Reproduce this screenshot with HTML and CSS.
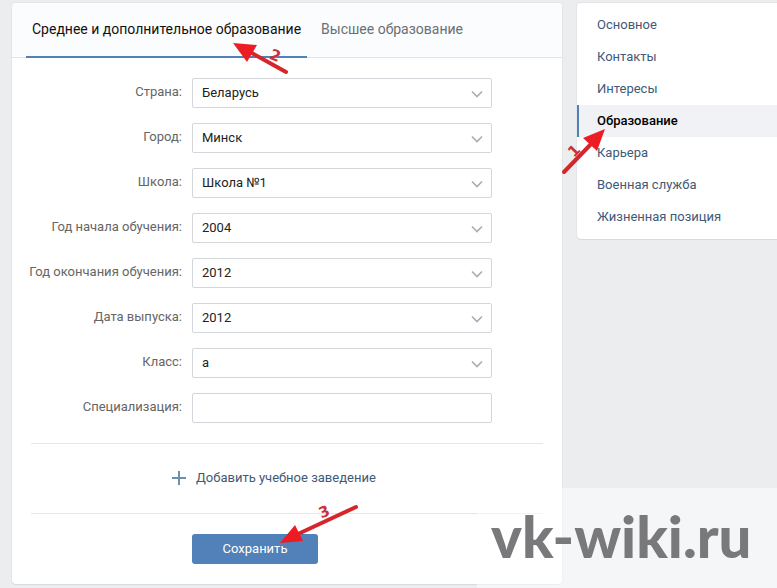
FILE: index.html
```html
<!DOCTYPE html>
<html lang="ru">
<head>
  <meta charset="utf-8">
  <title>Образование</title>
  <link rel="stylesheet" href="styles.css">
</head>
<body>
  <svg class="symbols" width="0" height="0">
    <symbol id="chevron" viewBox="0 0 12 8">
      <path d="M1 1.5 L6 6.5 L11 1.5" fill="none" stroke="currentColor" stroke-width="1.6"/>
    </symbol>
  </svg>

  <div class="page">
    <!-- Education form -->
    <main class="card content">
      <nav class="tabs">
        <a class="tab active" href="#school">Среднее и дополнительное образование
          <svg class="arrow arrow-tab" width="60" height="40" viewBox="0 0 60 40">
            <path d="M17 9 L53 29" stroke="#d5262c" stroke-width="4" stroke-linecap="round"/>
            <path d="M0 0 L24 2 L14 19 Z" fill="#ed1c24"/>
            <text class="arrow-number" x="37" y="17" transform="rotate(22 41 12)">2</text>
          </svg>
        </a>
        <a class="tab" href="#university">Высшее образование</a>
      </nav>

      <form>
        <div class="fields">
          <div class="row">
            <label for="country">Страна:</label>
            <div class="select">
              <select id="country"><option>Беларусь</option></select>
              <svg class="chevron"><use href="#chevron"/></svg>
            </div>
          </div>
          <div class="row">
            <label for="city">Город:</label>
            <div class="select">
              <select id="city"><option>Минск</option></select>
              <svg class="chevron"><use href="#chevron"/></svg>
            </div>
          </div>
          <div class="row">
            <label for="school-name">Школа:</label>
            <div class="select">
              <select id="school-name"><option>Школа №1</option></select>
              <svg class="chevron"><use href="#chevron"/></svg>
            </div>
          </div>
          <div class="row">
            <label for="start">Год начала обучения:</label>
            <div class="select">
              <select id="start"><option>2004</option></select>
              <svg class="chevron"><use href="#chevron"/></svg>
            </div>
          </div>
          <div class="row">
            <label for="finish">Год окончания обучения:</label>
            <div class="select">
              <select id="finish"><option>2012</option></select>
              <svg class="chevron"><use href="#chevron"/></svg>
            </div>
          </div>
          <div class="row">
            <label for="graduation">Дата выпуска:</label>
            <div class="select">
              <select id="graduation"><option>2012</option></select>
              <svg class="chevron"><use href="#chevron"/></svg>
            </div>
          </div>
          <div class="row">
            <label for="class">Класс:</label>
            <div class="select">
              <select id="class"><option>а</option></select>
              <svg class="chevron"><use href="#chevron"/></svg>
            </div>
          </div>
          <div class="row">
            <label for="speciality">Специализация:</label>
            <input type="text" id="speciality">
          </div>
        </div>

        <div class="add">
          <a href="#add">
            <svg width="14" height="14" viewBox="0 0 14 14">
              <path d="M7 0 V14 M0 7 H14" stroke="#6f8eb0" stroke-width="2"/>
            </svg>
            Добавить учебное заведение
          </a>
        </div>

        <div class="actions">
          <button type="submit" class="save">Сохранить
            <svg class="arrow arrow-save" width="82" height="42" viewBox="0 0 82 42">
              <path d="M18 31 L76 4" stroke="#d5262c" stroke-width="4" stroke-linecap="round"/>
              <path d="M0 40 L15 22 L23 38 Z" fill="#ed1c24"/>
              <text class="arrow-number" x="39" y="14" transform="rotate(-22 44 9)">3</text>
            </svg>
          </button>
        </div>
      </form>
    </main>

    <!-- Section menu -->
    <aside class="card menu">
      <a href="#main">Основное</a>
      <a href="#contacts">Контакты</a>
      <a href="#interests">Интересы</a>
      <a class="active" href="#education">Образование
        <svg class="arrow arrow-menu" width="46" height="48" viewBox="0 0 46 48">
          <path d="M2 44 L31 14" stroke="#d5262c" stroke-width="4" stroke-linecap="round"/>
          <path d="M43 1 L21 10 L35 23 Z" fill="#ed1c24"/>
          <text class="arrow-number" x="7" y="28" transform="rotate(-45 12 23)">1</text>
        </svg>
      </a>
      <a href="#career">Карьера</a>
      <a href="#military">Военная служба</a>
      <a href="#views">Жизненная позиция</a>
    </aside>
  </div>

  <div class="watermark">vk-wiki.ru</div>
</body>
</html>
```
FILE: styles.css
```css
* {
  box-sizing: border-box;
}

body {
  margin: 0;
  background: #ebedef;
  color: #222;
  font-family: Roboto, "Noto Sans", sans-serif;
  font-size: 13px;
  line-height: 16px;
}

a {
  color: #3d5a78;
  text-decoration: none;
}

.symbols {
  position: absolute;
}

.page {
  display: flex;
  align-items: flex-start;
  gap: 15px;
  padding: 3px 0 4px 12px;
}

.card {
  background: #fff;
  border-radius: 4px;
  box-shadow: 0 1px 0 #d7dadf, 0 0 0 1px #e3e5e9;
}

.content {
  flex: 1;
  min-width: 0;
}

/* Tabs */
.tabs {
  display: flex;
  gap: 8px;
  height: 55px;
  padding: 0 14px;
  background: #fafcfe;
  border-bottom: 1px solid #dfe5eb;
  border-radius: 4px 4px 0 0;
}

.tab {
  position: relative;
  height: 55px;
  padding: 18px 6px;
  color: #6b6f75;
  font-size: 14px;
  white-space: nowrap;
}

.tab.active {
  color: #111;
  border-bottom: 2px solid #5181b8;
}

/* Form */
.fields {
  display: grid;
  gap: 15px;
  padding: 20px 0;
}

.row {
  display: grid;
  grid-template-columns: 170px minmax(0, 300px);
  column-gap: 10px;
}

.row label {
  padding-top: 6px;
  color: #656565;
  text-align: right;
}

.select {
  position: relative;
}

.row select,
.row input {
  display: block;
  width: 100%;
  height: 30px;
  margin: 0;
  padding: 0 9px;
  appearance: none;
  background: #fff;
  border: 1px solid #d3d6da;
  border-radius: 2px;
  color: #222;
  font: inherit;
}

.chevron {
  position: absolute;
  top: 12px;
  right: 9px;
  width: 12px;
  height: 8px;
  color: #a8adb2;
  pointer-events: none;
}

.add {
  display: flex;
  margin: 0 19px;
  padding: 26px 0 27px 141px;
  border: solid #e4e6e9;
  border-width: 1px 0;
}

.add a {
  display: flex;
  align-items: center;
  gap: 10px;
}

.actions {
  padding: 20px 20px 20px 180px;
}

.save {
  position: relative;
  display: block;
  width: 126px;
  height: 30px;
  padding: 0;
  background: #5181b8;
  border: none;
  border-radius: 3px;
  color: #fff;
  font: inherit;
  cursor: pointer;
}

/* Menu */
.menu {
  display: flex;
  flex-direction: column;
  flex: 0 0 200px;
  padding: 6px 0;
  border-radius: 4px 0 0 4px;
}

.menu a {
  position: relative;
  padding: 8px 18px;
  border-left: 2px solid transparent;
}

.menu .active {
  background: #f0f2f5;
  border-color: #5181b8;
  color: #000;
  font-weight: 500;
}

/* Numbered arrows */
.arrow {
  position: absolute;
  z-index: 1;
  overflow: visible;
  pointer-events: none;
}

.arrow-number {
  fill: #c9303a;
  font: bold 15px "DejaVu Sans", sans-serif;
}

.arrow-tab {
  top: 40px;
  right: 14px;
}

.arrow-save {
  top: -31px;
  left: 88px;
}

.arrow-menu {
  top: 23px;
  left: -17px;
}

.watermark {
  position: fixed;
  right: 0;
  bottom: 0;
  z-index: 2;
  width: 300px;
  height: 100px;
  padding-left: 14px;
  background: rgba(255, 255, 255, 0.5);
  color: #79797b;
  font: 900 58px/96px Lato, sans-serif;
  white-space: nowrap;
}
```
